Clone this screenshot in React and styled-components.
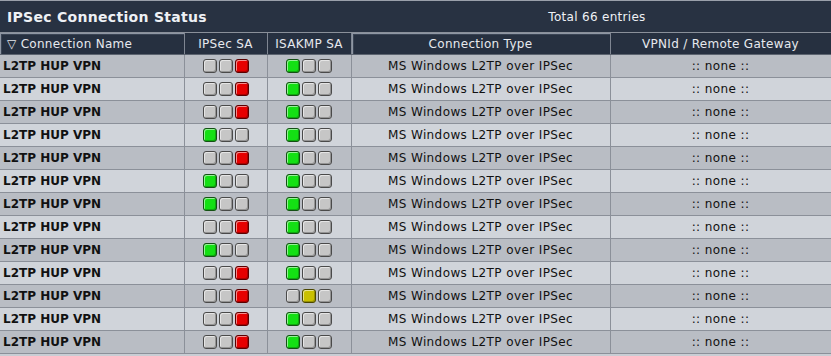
import styled, { createGlobalStyle } from "styled-components";

const GlobalStyle = createGlobalStyle`
  html, body {
    margin: 0;
    padding: 0;
    overflow: hidden;
    background: #c9cdd4;
  }
  body {
    font-family: "DejaVu Sans", Verdana, sans-serif;
  }
`;

const Panel = styled.div`
  width: 831px;
  border-top: 1px solid #9aa0aa;
`;

const TitleBar = styled.div`
  display: flex;
  align-items: center;
  height: 31px;
  background: #283242;
  color: #eef1f5;
  border-bottom: 1px solid #8a909a;
`;

const Title = styled.div`
  width: 363px;
  padding-left: 7px;
  box-sizing: border-box;
  font-size: 14px;
  font-weight: bold;
  letter-spacing: 0.3px;
`;

const Total = styled.div`
  flex: 1;
  text-align: center;
  font-size: 12px;
  letter-spacing: 0.3px;
`;

const Table = styled.table`
  width: 831px;
  border-collapse: collapse;
  table-layout: fixed;
  font-size: 12px;
`;

const Th = styled.th`
  height: 21px;
  padding: 0;
  background: #263040;
  color: #e6e9ee;
  font-weight: normal;
  letter-spacing: 0.3px;
  text-align: ${(p) => (p.$left ? "left" : "center")};
  padding-left: ${(p) => (p.$left ? "7px" : "0")};
  border-right: 1px solid #7f8692;
  border-bottom: 1px solid #5c6470;
  box-shadow: ${(p) =>
    p.$active ? "inset 1px 1px 0 #8e96a3, inset 2px 2px 0 #3a4454" : "none"};
  white-space: nowrap;
`;

const Tr = styled.tr`
  background: ${(p) => (p.$odd ? "#d0d4da" : "#b9bdc4")};
`;

const Td = styled.td`
  height: 22px;
  padding: 0;
  border-right: 1px solid #8b9099;
  border-bottom: 1px solid #8b9099;
  color: #111;
  text-align: ${(p) => (p.$left ? "left" : "center")};
  padding-left: ${(p) => (p.$left ? "3px" : "0")};
  font-weight: ${(p) => (p.$bold ? "bold" : "normal")};
  letter-spacing: ${(p) => (p.$bold ? "0" : "0.4px")};
  white-space: nowrap;
  vertical-align: middle;
`;

const Lights = styled.div`
  display: inline-flex;
  gap: 2px;
  vertical-align: middle;
`;

const lightColors = {
  g: { bg: "#c6c6c6", edge: "#4a4a4a" },
  G: { bg: "#14e014", edge: "#145014" },
  R: { bg: "#e60000", edge: "#5a0000" },
  Y: { bg: "#c9c000", edge: "#4a4600" },
};

const Light = styled.span`
  width: 12px;
  height: 12px;
  border: 1px solid ${(p) => lightColors[p.$c].edge};
  border-radius: 3px;
  background: ${(p) => lightColors[p.$c].bg};
  box-shadow: inset 1px 1px 0 rgba(255, 255, 255, 0.55),
    inset -1px -1px 0 rgba(0, 0, 0, 0.25);
`;

const rows = [
  ["ggR", "Ggg"],
  ["ggR", "Ggg"],
  ["ggR", "Ggg"],
  ["Ggg", "Ggg"],
  ["ggR", "Ggg"],
  ["Ggg", "Ggg"],
  ["Ggg", "Ggg"],
  ["ggR", "Ggg"],
  ["Ggg", "Ggg"],
  ["ggR", "Ggg"],
  ["ggR", "gYg"],
  ["ggR", "Ggg"],
  ["ggR", "Ggg"],
];

const Status = ({ code }) => (
  <Lights>
    {code.split("").map((c, i) => (
      <Light key={i} $c={c} />
    ))}
  </Lights>
);

const App = () => {
  return (
    <>
      <GlobalStyle />
      <Panel>
        <TitleBar>
          <Title>IPSec Connection Status</Title>
          <Total>Total 66 entries</Total>
        </TitleBar>
        <Table>
          <colgroup>
            <col style={{ width: 184 }} />
            <col style={{ width: 83 }} />
            <col style={{ width: 84 }} />
            <col style={{ width: 259 }} />
            <col style={{ width: 221 }} />
          </colgroup>
          <thead>
            <tr>
              <Th $left $active>▽ Connection Name</Th>
              <Th>IPSec SA</Th>
              <Th>ISAKMP SA</Th>
              <Th $active>Connection Type</Th>
              <Th>VPNId / Remote Gateway</Th>
            </tr>
          </thead>
          <tbody>
            {rows.map((r, i) => (
              <Tr key={i} $odd={i % 2 === 1}>
                <Td $left $bold>L2TP HUP VPN</Td>
                <Td><Status code={r[0]} /></Td>
                <Td><Status code={r[1]} /></Td>
                <Td>MS Windows L2TP over IPSec</Td>
                <Td>:: none ::</Td>
              </Tr>
            ))}
          </tbody>
        </Table>
      </Panel>
    </>
  );
};

export default App;
